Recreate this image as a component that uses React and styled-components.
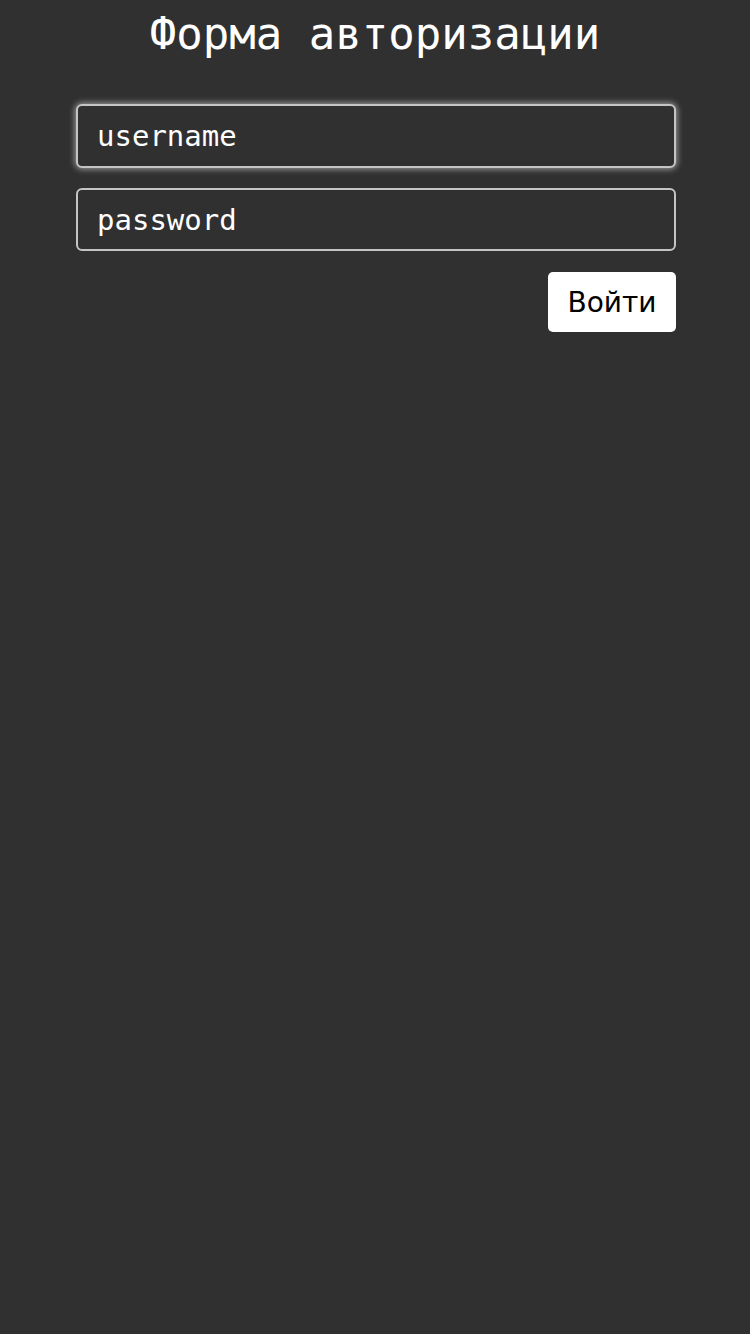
import React from "react"
import styled, { createGlobalStyle } from "styled-components"

const GlobalStyle = createGlobalStyle`
  html, body {
    margin: 0;
    padding: 0;
    background-color: #303030;
    font-family: "DejaVu Sans Mono", monospace;
  }
`

const Page = styled.div`
  min-height: 1334px;
  background-color: #303030;
  display: flex;
  flex-direction: column;
  align-items: center;
`

const Title = styled.h1`
  margin: 0;
  padding-top: 6px;
  font-family: "DejaVu Sans Mono", monospace;
  font-weight: normal;
  font-size: 44px;
  line-height: 56px;
  color: #ffffff;
  text-align: center;
`

const Form = styled.form`
  width: 600px;
  margin-top: 42px;
  margin-left: 2px;
  display: flex;
  flex-direction: column;
  gap: 20px;
`

const Input = styled.input`
  box-sizing: border-box;
  width: 100%;
  height: ${(p) => (p.$tall ? 64 : 63)}px;
  padding: 0 19px;
  border: 2px solid #c4c4c4;
  border-radius: 6px;
  background: #303030;
  color: #ffffff;
  font-family: "DejaVu Sans Mono", monospace;
  font-size: 29px;
  outline: none;
  box-shadow: ${(p) => (p.$focused ? "0 0 6px 1px rgba(255, 255, 255, 0.55)" : "none")};
  &::placeholder {
    color: #ffffff;
    opacity: 1;
  }
`

const Actions = styled.div`
  display: flex;
  justify-content: flex-end;
  margin-top: 1px;
`

const Button = styled.button`
  width: 128px;
  height: 60px;
  padding: 0;
  border: none;
  border-radius: 5px;
  background: #ffffff;
  color: #000000;
  font-family: "DejaVu Sans", sans-serif;
  font-size: 28px;
  cursor: pointer;
`

const App = () => {
  return (
    <Page>
      <GlobalStyle />
      <Title>Форма авторизации</Title>
      <Form onSubmit={(e) => e.preventDefault()}>
        <Input $focused $tall placeholder="username" />
        <Input type="text" placeholder="password" />
        <Actions>
          <Button type="submit">Войти</Button>
        </Actions>
      </Form>
    </Page>
  )
}

export default App
